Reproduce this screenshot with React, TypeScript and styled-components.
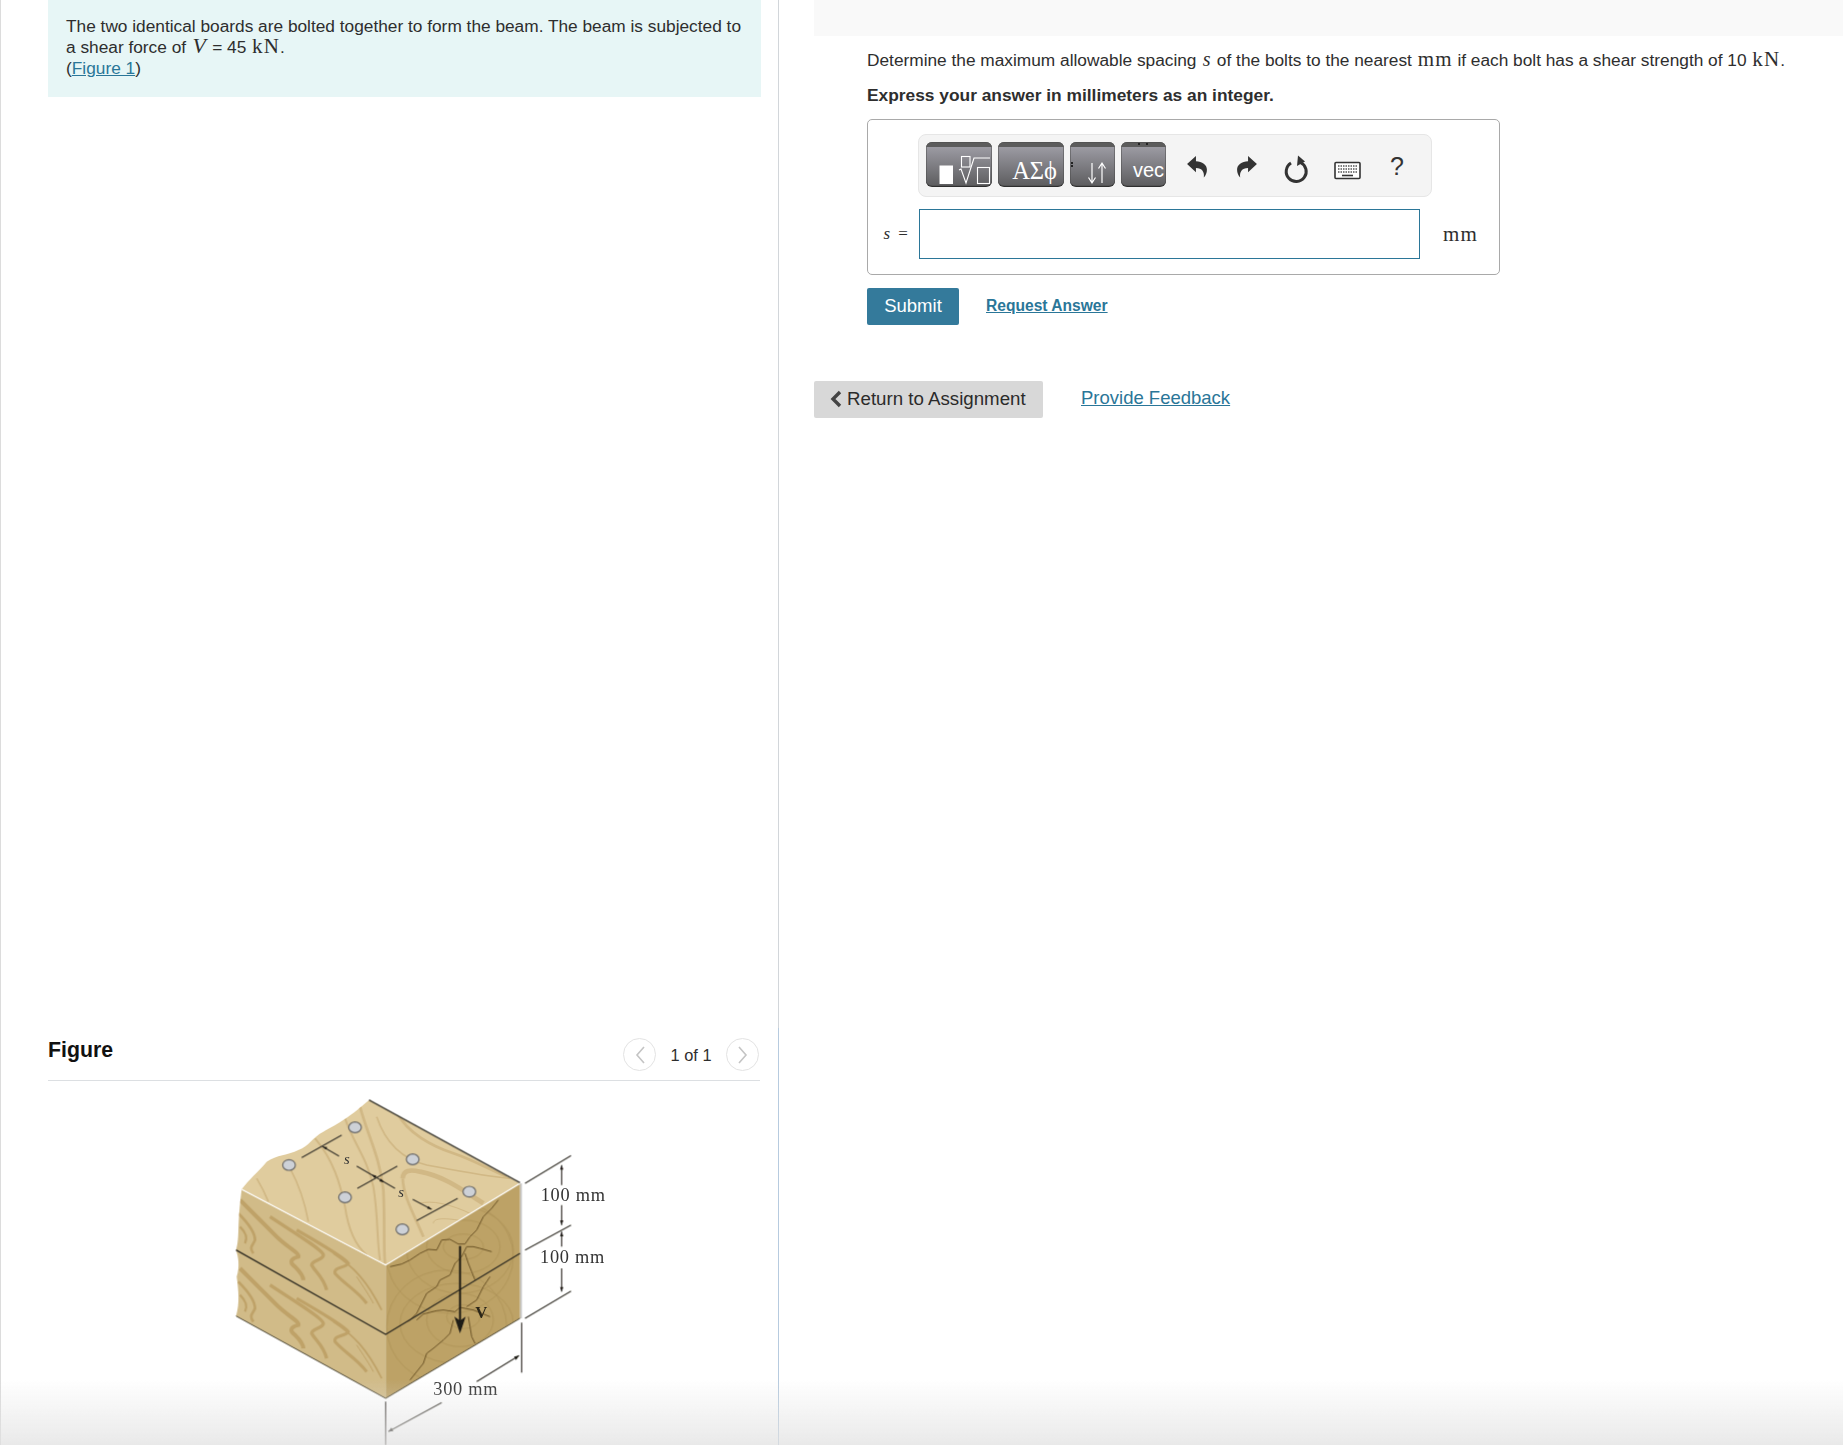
import React from "react";
import styled, { createGlobalStyle } from "styled-components";

const Global = createGlobalStyle`
  html, body { margin: 0; padding: 0; background: #fff; }
  body { font-family: "Liberation Sans", Arial, sans-serif; color: #2e2e2e; }
`;

const Page = styled.div`
  position: relative;
  display: flex;
  width: 1843px;
  height: 1445px;
  overflow: hidden;
`;
const BottomFade = styled.div`
  position: absolute;
  left: 0;
  right: 0;
  bottom: 0;
  height: 66px;
  background: linear-gradient(to bottom, rgba(225, 225, 225, 0), rgba(225, 225, 225, 0.72));
  pointer-events: none;
`;
const LeftPanel = styled.div`
  width: 779px;
  flex: none;
  display: flex;
  flex-direction: column;
  box-sizing: border-box;
  border-left: 1px solid #dcdcdc;
`;
const StatementPane = styled.div`
  height: 1028px;
  flex: none;
  box-sizing: border-box;
  padding: 0 17px 0 47px;
  border-right: 1px solid #d2d6da;
`;
const Callout = styled.div`
  height: 97px;
  box-sizing: border-box;
  padding: 16px 16px 0 18px;
  background: #e7f6f6;
  font-size: 17.3px;
  line-height: 21px;
`;
const MathVar = styled.span<{ $size?: number }>`
  font-family: "Liberation Serif", serif;
  font-style: italic;
  line-height: 0;
  margin: 0 1.5px;
  font-size: ${(p) => p.$size ?? 22}px;
`;
const MathRoman = styled.span`
  font-family: "Liberation Serif", serif;
  font-size: 21px;
  line-height: 0;
  letter-spacing: 1.1px;
  margin-left: 1px;
`;
const TextLink = styled.a`
  color: #2a7698;
  text-decoration: underline;
`;
const FigurePane = styled.div`
  flex: 1;
  box-sizing: border-box;
  padding: 0 18px 0 47px;
  border-right: 1px solid #b7cbdf;
`;
const FigureHeader = styled.div`
  height: 52px;
  display: flex;
  align-items: center;
  box-sizing: content-box;
  border-bottom: 1px solid #dcdfe2;
`;
const FigureTitle = styled.h2`
  margin: 0 0 8px;
  flex: 1;
  font-size: 21.3px;
  line-height: 26px;
  font-weight: 700;
  color: #111;
`;
const Pager = styled.div`
  display: flex;
  align-items: center;
  margin-top: 1px;
  margin-right: 1px;
`;
const PagerButton = styled.span`
  width: 31px;
  height: 31px;
  border: 1px solid #e3e3e3;
  border-radius: 50%;
  display: flex;
  align-items: center;
  justify-content: center;
`;
const PagerLabel = styled.span`
  width: 70px;
  text-align: center;
  font-size: 16.4px;
  margin-top: 2px;
`;
const FigureArt = styled.svg`
  display: block;
  margin: 9px 0 0 172px;
  width: 400px;
  height: 355px;
`;
const RightPanel = styled.div`
  flex: 1;
  padding-left: 35px;
`;
const TopBar = styled.div`
  height: 36px;
  background: #f9f9f9;
`;
const Content = styled.div`
  margin-left: 53px;
`;
const Prompt = styled.p`
  margin: 14px 0 0;
  font-size: 17.3px;
  line-height: 21px;
  white-space: nowrap;
`;
const Instruction = styled.p`
  margin: 14px 0 0;
  font-size: 17.35px;
  line-height: 21px;
  font-weight: 700;
`;
const AnswerBox = styled.div`
  margin-top: 13px;
  width: 633px;
  height: 156px;
  box-sizing: border-box;
  padding-top: 14px;
  border: 1px solid #a9a9a9;
  border-radius: 5px;
`;
const Toolbar = styled.div`
  margin-left: 50px;
  width: 514px;
  height: 63px;
  box-sizing: border-box;
  padding: 7px;
  display: flex;
  border: 1px solid #e6e6e6;
  border-radius: 8px;
  background: #f4f4f4;
`;
const MathButton = styled.div<{ $w: number }>`
  position: relative;
  width: ${(p) => p.$w}px;
  height: 45px;
  flex: none;
  margin-right: 6px;
  box-sizing: border-box;
  border-radius: 6px;
  border-bottom: 1px solid #2f2f2f;
  box-shadow: 0 0 0 0.5px #4a4a4a inset;
  background: linear-gradient(to bottom, #5c5c5c 0, #5c5c5c 5px, #9b9aa2 5.5px, #5d5d5f 100%);
  color: #fff;
  display: flex;
  align-items: center;
  justify-content: flex-end;
  overflow: hidden;
`;
const GreekLabel = styled.span`
  font-family: "Liberation Serif", serif;
  font-size: 24.5px;
  margin: 13px 7px 0 0;
  white-space: nowrap;
`;
const VecLabel = styled.span`
  font-size: 20px;
  margin: 13px 2px 0 0;
`;
const TopDots = styled.span`
  position: absolute;
  top: 1px;
  left: 17px;
  width: 11px;
  height: 2px;
  background: radial-gradient(circle at 1px 1px, #222 1px, transparent 1.2px) 0 0 / 8px 2px repeat-x;
`;
const SideDots = styled.span`
  position: absolute;
  top: 20px;
  left: 1px;
  width: 2px;
  height: 6px;
  background: radial-gradient(circle at 1px 1px, #222 1px, transparent 1.2px) 0 0 / 2px 3px repeat-y;
`;
const ToolIcon = styled.div<{ $dy: number }>`
  width: 50px;
  height: 45px;
  flex: none;
  display: flex;
  align-items: center;
  justify-content: center;
  color: #333;
  font-size: 25px;
  margin-top: ${(p) => p.$dy}px;
`;
const InputRow = styled.div`
  margin-top: 12px;
  display: flex;
  align-items: center;
`;
const EqLabel = styled.span`
  width: 51px;
  box-sizing: border-box;
  padding-left: 14px;
  font-family: "Liberation Serif", serif;
  font-size: 17px;
  letter-spacing: 1.2px;
  white-space: nowrap;
`;
const AnswerInput = styled.div`
  width: 501px;
  height: 50px;
  box-sizing: border-box;
  border: 1px solid #2b7698;
  background: #fff;
`;
const Unit = styled.span`
  margin-left: 23px;
  font-family: "Liberation Serif", serif;
  font-size: 21px;
  letter-spacing: 1.2px;
`;
const ActionRow = styled.div`
  margin-top: 13px;
  display: flex;
  align-items: center;
  gap: 27px;
`;
const SubmitButton = styled.div`
  width: 92px;
  height: 37px;
  box-sizing: border-box;
  padding-bottom: 2px;
  border-radius: 2px;
  background: #347a9b;
  color: #fff;
  font-size: 18.5px;
  display: flex;
  align-items: center;
  justify-content: center;
`;
const RequestLink = styled(TextLink)`
  font-size: 15.6px;
  font-weight: 700;
  margin-top: -2px;
`;
const FooterRow = styled.div`
  margin-top: 56px;
  display: flex;
  align-items: center;
  gap: 38px;
`;
const ReturnButton = styled.div`
  width: 229px;
  height: 37px;
  box-sizing: border-box;
  padding: 0 0 1px 16px;
  border-radius: 2px;
  background: #d8d8d8;
  font-size: 18.7px;
  display: flex;
  align-items: center;
  gap: 5px;
  color: #2b2b2b;
`;
const FeedbackLink = styled(TextLink)`
  font-size: 18.5px;
  margin-top: -3px;
`;

const TemplateGlyph = () => (
  <svg width="66" height="45" viewBox="0 0 66 45" fill="none" stroke="#fff" strokeWidth="1.1">
    <rect x="13.5" y="23.5" width="13.5" height="18.5" fill="#fff" stroke="none" />
    <rect x="35.5" y="14.5" width="8.5" height="10.5" />
    <path d="M33 28l2-1 5 14 8-25h16" />
    <rect x="51.5" y="25.5" width="12" height="16" />
  </svg>
);
const ArrowsGlyph = () => (
  <svg width="45" height="45" viewBox="0 0 45 45" fill="none" stroke="#fff" strokeWidth="1.2">
    <path d="M22 21v20M18.5 35.5L22 41l3.5-5.5" />
    <path d="M32 41V21M28.5 26.5L32 21l3.5 5.5" />
  </svg>
);
const ArrowGlyph = ({ mirror }: { mirror?: boolean }) => (
  <svg width="22" height="23" viewBox="0 0 21 22" fill="#333">
    <path
      transform={mirror ? "matrix(-1 0 0 1 21 0)" : undefined}
      d="M1 8.5L9.5 1v5C15.5 6 20 9.5 20 14c0 3-1.2 5.5-3 7.5 .8-5-1.5-9-7.5-9V16.5Z"
    />
  </svg>
);
const ReloadGlyph = () => (
  <svg width="26" height="30" viewBox="0 0 26 30" fill="none">
    <path d="M16.5 8.5A10 10 0 1 1 7 9" stroke="#333" strokeWidth="3" />
    <path d="M14 1.5l7 6-8 4.5z" fill="#333" />
  </svg>
);
const KeyboardGlyph = () => (
  <svg width="27" height="19" viewBox="0 0 27 19" fill="none">
    <rect x="1" y="1.5" width="25" height="16" rx="1" stroke="#333" strokeWidth="1.6" fill="#fff" />
    <path d="M4 5h19M4 8h19M4 11h19" stroke="#555" strokeWidth="1.5" strokeDasharray="1.5 1" />
    <path d="M8 14.5h11" stroke="#333" strokeWidth="1.6" />
  </svg>
);
const BoldChevron = () => (
  <svg width="12" height="18" viewBox="0 0 12 18" fill="none" stroke="#444" strokeWidth="3.4">
    <path d="M10 2L3 9l7 7" />
  </svg>
);
const Chevron = ({ left }: { left?: boolean }) => (
  <svg width="12" height="20" viewBox="0 0 12 20" fill="none" stroke="#c4c4c4" strokeWidth="1.6">
    <path d={left ? "M10 2L3 10l7 8" : "M2 2l7 8-7 8"} />
  </svg>
);

const BeamFigure = () => (
  <FigureArt viewBox="0 0 1200 1065">
    <defs>
      <filter id="soft" x="-5%" y="-5%" width="110%" height="110%">
        <feGaussianBlur stdDeviation="1.6" />
      </filter>
      <clipPath id="topFace">
        <path d="M447 30L900 280L497 525L65 298C85 270 115 245 140 215C170 195 205 195 235 180C265 170 280 140 310 125C345 105 380 90 447 30Z" />
      </clipPath>
      <clipPath id="leftFace">
        <path d="M65 298L497 525V925L48 678C60 640 55 600 50 560C60 530 55 500 48 480C60 440 50 410 65 298Z" />
      </clipPath>
      <clipPath id="rightFace">
        <path d="M497 525L900 280V685L497 925Z" />
      </clipPath>
      <g id="grain" fill="none" stroke="#bfa268">
        <path strokeWidth="12" d="M60 330C100 370 130 400 170 440C200 470 240 490 235 500C215 505 205 515 225 530C240 545 250 560 250 570" />
        <path strokeWidth="8" d="M55 370C85 400 105 430 105 450C100 465 85 470 100 490" />
        <path strokeWidth="7" d="M60 410C75 425 85 440 75 460" />
        <path strokeWidth="10" d="M150 380C210 420 310 480 310 495C310 510 275 510 275 525C285 545 310 560 320 600" />
        <path strokeWidth="9" d="M230 420C300 460 380 510 385 520C375 535 340 530 345 550C370 580 410 600 440 640" />
        <path strokeWidth="5" d="M340 490C400 530 440 570 485 660" />
        <path strokeWidth="3" d="M410 560C430 590 450 620 460 640" />
      </g>
    </defs>
    <g filter="url(#soft)">
      <path d="M447 30L900 280L497 525L65 298C85 270 115 245 140 215C170 195 205 195 235 180C265 170 280 140 310 125C345 105 380 90 447 30Z" fill="#e0cc9e" />
      <g clipPath="url(#topFace)" fill="none" stroke="#d1b885">
        <path strokeWidth="8" d="M420 50C440 130 480 200 490 300C495 400 490 470 495 520" />
        <path strokeWidth="6" d="M375 85C400 160 440 200 460 290C475 380 470 450 480 510" />
        <path strokeWidth="6" d="M285 145C340 210 360 280 375 350C385 420 410 470 440 495" />
        <path strokeWidth="5" d="M210 235C240 290 255 340 265 395" />
        <path strokeWidth="5" d="M110 265C125 290 135 310 145 335" />
        <path strokeWidth="5" d="M470 80C500 170 560 210 620 225C700 240 800 260 870 265" />
        <path strokeWidth="8" d="M530 65C560 130 640 170 700 190C760 210 810 240 860 260" />
        <path strokeWidth="14" d="M548 265C550 240 570 238 600 245C680 260 740 310 790 340" />
        <path strokeWidth="8" d="M548 265C550 320 580 370 610 440" />
        <path strokeWidth="3" d="M640 400C640 380 690 385 740 395" />
        <path strokeWidth="3" d="M600 340C630 330 690 340 760 375" />
      </g>
      <path d="M65 298L497 525V925L48 678C60 640 55 600 50 560C60 530 55 500 48 480C60 440 50 410 65 298Z" fill="#d1bb88" />
      <g clipPath="url(#leftFace)">
        <use href="#grain" />
        <use href="#grain" y="205" />
      </g>
      <path d="M497 525L900 280V685L497 925Z" fill="#bda266" />
      <g clipPath="url(#rightFace)" fill="none" stroke="#ad9258" strokeWidth="2">
        <ellipse cx="730" cy="470" rx="60" ry="38" />
        <ellipse cx="730" cy="470" rx="110" ry="80" />
        <ellipse cx="720" cy="480" rx="160" ry="130" />
        <ellipse cx="690" cy="500" rx="190" ry="170" />
        <ellipse cx="730" cy="680" rx="50" ry="36" />
        <ellipse cx="720" cy="690" rx="100" ry="80" />
        <ellipse cx="710" cy="700" rx="170" ry="120" />
        <ellipse cx="680" cy="710" rx="180" ry="170" />
      </g>
      <g fill="none" stroke="#6d5528" strokeWidth="3">
        <path d="M510 530L545 522 570 510 600 490 625 478 650 480 665 450 690 448 715 462 735 462 750 440 770 420 790 380 815 355 835 330" />
        <path d="M740 470L760 470 780 475 815 485" />
        <path d="M740 470L725 500 705 520 690 555 660 570 650 590 620 610 605 640 590 670 565 695" />
        <path d="M735 490L745 520 755 545 765 570" />
        <path d="M590 690L610 672 650 662 670 660 705 665 720 652 760 660" />
        <path d="M810 560L790 590 770 630 740 650" />
        <path d="M700 690L690 730 670 750 640 775 620 790 610 820 570 870" />
        <path d="M745 680L750 710 755 740 765 760" />
        <path d="M760 660L810 680" />
      </g>
      <path d="M903 280V685" stroke="#c3c3c3" strokeWidth="5" />
      <path d="M447 30L900 278" stroke="#3b382e" strokeWidth="4" fill="none" />
      <path d="M48 678L497 925L900 685" stroke="#4a4533" strokeWidth="3" fill="none" />
      <path d="M48 480L497 733L900 490" stroke="#2f2c22" strokeWidth="4" fill="none" />
      <path d="M65 298L497 525L900 280" stroke="#fff" strokeWidth="3.5" fill="none" />
      {[[405, 112], [207, 225], [578, 208], [375, 322], [748, 305], [547, 418]].map(([cx, cy]) => (
        <ellipse key={cx} cx={cx} cy={cy} rx="19" ry="16" fill="#cdd1d7" stroke="#666" strokeWidth="3.5" />
      ))}
      <g stroke="#35322a" strokeWidth="3.5" fill="none">
        <path d="M245 203L365 135M308 170L357 198M410 228L525 295M412 295L532 228M578 328L635 358M590 392L713 325" />
        <path d="M720 468V695" stroke="#1d1a14" strokeWidth="6" />
        <path d="M915 280L1053 197M915 480L1053 405M915 685L1053 603" />
        <path d="M1025 225V285M1025 345V405M1025 425V470M1025 535V605" />
        <path d="M905 698V848M497 935V1065M770 875L897 797M505 1025L665 938" />
      </g>
      <g fill="#1d1a14">
        <path d="M703 680L720 730L737 680L720 692Z" />
        <path d="M1025 225l-5 14h10zM1025 405l-5-14h10zM1025 425l-5 14h10zM1025 605l-5-14h10z" />
        <path d="M897 797l-15 3 6 10zM505 1025l15-2-6-10z" />
        <path d="M308 170l14 1-5 8zM455 254l14 3-5 8zM492 277l-14-3 5-8zM635 358l-14-2 4-8z" />
      </g>
    </g>
    <g fontFamily="'Liberation Serif', serif" fill="#333">
      <text x="372" y="222" fontSize="44" fontStyle="italic">s</text>
      <text x="535" y="322" fontSize="44" fontStyle="italic">s</text>
      <text x="962" y="332" fontSize="55" letterSpacing="2.2">100 mm</text>
      <text x="960" y="520" fontSize="55" letterSpacing="2.2">100 mm</text>
      <text x="640" y="915" fontSize="55" letterSpacing="2.2">300 mm</text>
      <text x="766" y="685" fontSize="50" fontWeight="700" fill="#2b2618">V</text>
    </g>
  </FigureArt>
);

export default function App() {
  return (
    <Page>
      <Global />
      <LeftPanel>
        <StatementPane>
          <Callout>
            The two identical boards are bolted together to form the beam. The beam is subjected to a shear force of{" "}
            <MathVar>V</MathVar> = 45 <MathRoman>kN</MathRoman>.
            <br />(<TextLink>Figure 1</TextLink>)
          </Callout>
        </StatementPane>
        <FigurePane>
          <FigureHeader>
            <FigureTitle>Figure</FigureTitle>
            <Pager>
              <PagerButton><Chevron left /></PagerButton>
              <PagerLabel>1 of 1</PagerLabel>
              <PagerButton><Chevron /></PagerButton>
            </Pager>
          </FigureHeader>
          <BeamFigure />
        </FigurePane>
      </LeftPanel>
      <RightPanel>
        <TopBar />
        <Content>
          <Prompt>
            Determine the maximum allowable spacing <MathVar $size={20}>s</MathVar> of the bolts to the nearest{" "}
            <MathRoman>mm</MathRoman> if each bolt has a shear strength of 10 <MathRoman>kN</MathRoman>.
          </Prompt>
          <Instruction>Express your answer in millimeters as an integer.</Instruction>
          <AnswerBox>
            <Toolbar>
              <MathButton $w={66}><TemplateGlyph /></MathButton>
              <MathButton $w={66}><GreekLabel>ΑΣϕ</GreekLabel></MathButton>
              <MathButton $w={45}><SideDots /><ArrowsGlyph /></MathButton>
              <MathButton $w={45}><TopDots /><VecLabel>vec</VecLabel></MathButton>
              <ToolIcon $dy={2}><ArrowGlyph /></ToolIcon>
              <ToolIcon $dy={2}><ArrowGlyph mirror /></ToolIcon>
              <ToolIcon $dy={4}><ReloadGlyph /></ToolIcon>
              <ToolIcon $dy={6}><KeyboardGlyph /></ToolIcon>
              <ToolIcon $dy={2}>?</ToolIcon>
            </Toolbar>
            <InputRow>
              <EqLabel><MathVar $size={17}>s</MathVar> =</EqLabel>
              <AnswerInput />
              <Unit>mm</Unit>
            </InputRow>
          </AnswerBox>
          <ActionRow>
            <SubmitButton>Submit</SubmitButton>
            <RequestLink>Request Answer</RequestLink>
          </ActionRow>
        </Content>
        <FooterRow>
          <ReturnButton><BoldChevron />Return to Assignment</ReturnButton>
          <FeedbackLink>Provide Feedback</FeedbackLink>
        </FooterRow>
      </RightPanel>
      <BottomFade />
    </Page>
  );
}
